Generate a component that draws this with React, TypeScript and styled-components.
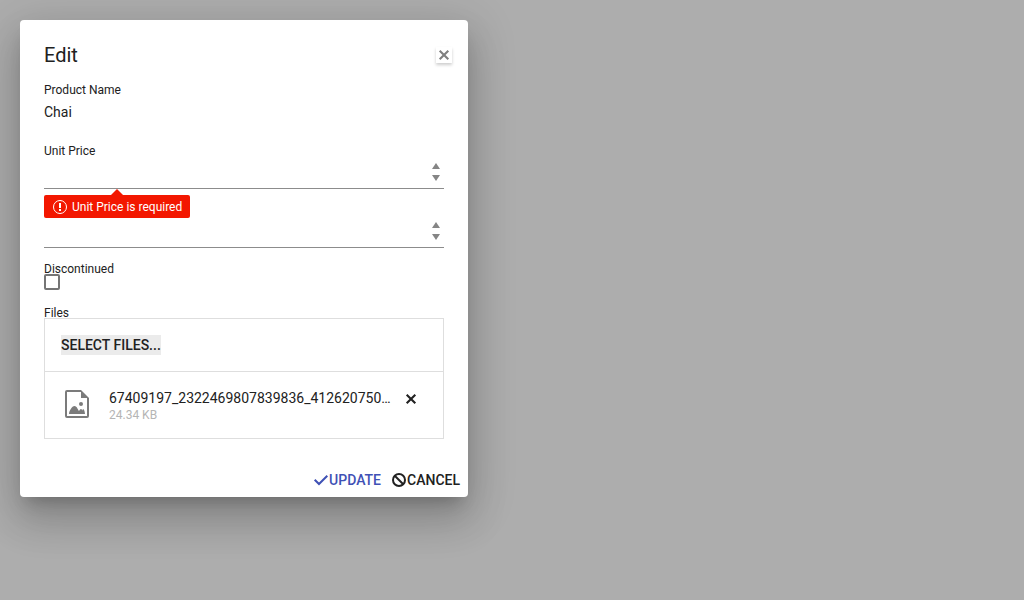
import React, { useState } from "react";
import styled, { createGlobalStyle } from "styled-components";

const GlobalStyle = createGlobalStyle`
  *, *::before, *::after { box-sizing: border-box; }
  body {
    margin: 0;
    background: #adadad;
    color: #212121;
    font: 400 14px/20px Roboto, sans-serif;
  }
  button, input { font: inherit; color: inherit; }
`;

const Page = styled.main`
  min-height: 100vh;
  padding: 20px;
`;

const Dialog = styled.form`
  max-width: 448px;
  background: #fff;
  border-radius: 4px;
  box-shadow: 0 11px 15px -7px rgba(0, 0, 0, 0.2), 0 24px 38px 3px rgba(0, 0, 0, 0.14),
    0 9px 46px 8px rgba(0, 0, 0, 0.12);
`;

const Header = styled.header`
  display: flex;
  align-items: center;
  justify-content: space-between;
  padding: 20px 16px 0 24px;
`;

const Title = styled.h1`
  margin: 0;
  font-size: 20px;
  font-weight: 400;
  line-height: 30px;
`;

const IconButton = styled.button<{ $raised?: boolean }>`
  display: flex;
  align-items: center;
  justify-content: center;
  flex: none;
  width: 16px;
  height: 16px;
  padding: 0;
  border: 0;
  background: none;
  cursor: pointer;
  color: ${(p) => (p.$raised ? "#7f7f7f" : "#212121")};
  box-shadow: ${(p) => (p.$raised ? "0 2px 3px rgba(0, 0, 0, 0.2)" : "none")};
`;

const Body = styled.div`
  display: flex;
  flex-direction: column;
  padding: 15px 24px 0;
`;

const Field = styled.div<{ $before?: number; $gap?: number }>`
  position: relative;
  display: flex;
  flex-direction: column;
  align-items: stretch;
  gap: ${(p) => p.$gap ?? 0}px;
  margin-top: ${(p) => p.$before ?? 0}px;
`;

const Label = styled.label`
  font-size: 12px;
  line-height: 10px;
`;

const Value = styled.output`
  display: block;
`;

const NumberBox = styled.div`
  display: flex;
  height: 30px;
  border-bottom: 1px solid #8c8c8c;
`;

const NumberInput = styled.input`
  flex: 1;
  min-width: 0;
  padding: 4px 0;
  border: 0;
  outline: 0;
  background: none;
  appearance: textfield;
  &::-webkit-inner-spin-button { display: none; }
`;

const Spinner = styled.div`
  display: flex;
  flex-direction: column;
  width: 16px;
  padding: 1px 0 4px;
`;

const SpinButton = styled.button`
  display: flex;
  align-items: center;
  justify-content: center;
  height: 12px;
  padding: 0;
  border: 0;
  background: none;
  color: #858585;
`;

const ErrorTip = styled.div`
  position: absolute;
  z-index: 1;
  top: calc(100% + 6px);
  left: 0;
  display: flex;
  align-items: center;
  gap: 4px;
  height: 23px;
  padding: 0 8px;
  border-radius: 2px;
  background: #f31700;
  color: #fff;
  font-size: 12px;
  line-height: 16px;
  &::before {
    content: "";
    position: absolute;
    bottom: 100%;
    left: 50%;
    margin-left: -6px;
    border: 6px solid transparent;
    border-top: 0;
    border-bottom-color: #f31700;
  }
`;

const Checkbox = styled.input`
  appearance: none;
  width: 16px;
  height: 16px;
  margin: 0;
  border: 2px solid #757575;
  border-radius: 2px;
  background: #fff;
  &:checked { background: #757575; }
`;

const Upload = styled.section`
  border: 1px solid #dedede;
`;

const DropZone = styled.div`
  display: flex;
  padding: 16px;
`;

const SelectButton = styled.button`
  padding: 0;
  border: 0;
  background: #ebebeb;
  font-weight: 500;
  cursor: pointer;
`;

const FileList = styled.ul`
  margin: 0;
  padding: 0;
  list-style: none;
`;

const FileRow = styled.li`
  display: flex;
  align-items: flex-start;
  padding: 16px 24px 16px 16px;
  border-top: 1px solid #dedede;
`;

const FileIcon = styled.svg`
  flex: none;
  width: 32px;
  height: 32px;
  margin-right: 16px;
  color: #7b7b7b;
`;

const FileInfo = styled.div`
  flex: 1;
  min-width: 0;
  margin-right: 12px;
`;

const FileName = styled.div`
  overflow: hidden;
  white-space: nowrap;
  text-overflow: ellipsis;
`;

const FileSize = styled.div`
  color: #b5b5b5;
  font-size: 12px;
  line-height: 14px;
`;

const RemoveSlot = styled.div`
  display: flex;
  padding-top: 3px;
`;

const Footer = styled.footer`
  display: flex;
  justify-content: flex-end;
  gap: 10px;
  padding: 31px 8px 7px;
`;

const ActionButton = styled.button<{ $primary?: boolean }>`
  display: flex;
  align-items: center;
  padding: 0;
  border: 0;
  background: none;
  font-weight: 500;
  cursor: pointer;
  color: ${(p) => (p.$primary ? "#3f51b5" : "#212121")};
`;

const Cross = () => (
  <svg width="16" height="16" viewBox="0 0 16 16" aria-hidden="true">
    <path d="M3.7 3.7 12.3 12.3M12.3 3.7 3.7 12.3" stroke="currentColor" strokeWidth="2.1" />
  </svg>
);

const Arrow = ({ down }: { down?: boolean }) => (
  <svg width="8" height="6" viewBox="0 0 8 6" aria-hidden="true">
    <path d={down ? "M0 0h8L4 6z" : "M0 6h8L4 0z"} fill="currentColor" />
  </svg>
);

type NumberFieldProps = { id: string; label: string; invalid?: boolean };

const NumberField = ({ id, label, invalid }: NumberFieldProps) => {
  const [value, setValue] = useState("");
  const step = (by: number) => setValue(String(Number(value) + by));
  return (
    <NumberBox>
      <NumberInput
        id={id}
        type="number"
        aria-label={label}
        aria-invalid={invalid}
        value={value}
        onChange={(e) => setValue(e.target.value)}
      />
      <Spinner>
        <SpinButton type="button" aria-label="Increase value" onClick={() => step(1)}>
          <Arrow />
        </SpinButton>
        <SpinButton type="button" aria-label="Decrease value" onClick={() => step(-1)}>
          <Arrow down />
        </SpinButton>
      </Spinner>
    </NumberBox>
  );
};

export default function App() {
  return (
    <>
      <GlobalStyle />
      <Page>
        <Dialog role="dialog" aria-labelledby="dialog-title" onSubmit={(e) => e.preventDefault()}>
          <Header>
            <Title id="dialog-title">Edit</Title>
            <IconButton $raised type="button" aria-label="Close">
              <Cross />
            </IconButton>
          </Header>

          <Body>
            <Field $gap={7}>
              <Label htmlFor="product-name">Product Name</Label>
              <Value id="product-name">Chai</Value>
            </Field>

            <Field $before={24} $gap={3}>
              <Label htmlFor="unit-price">Unit Price</Label>
              <NumberField id="unit-price" label="Unit Price" invalid />
              <ErrorTip role="alert">
                <svg width="16" height="16" viewBox="0 0 16 16" aria-hidden="true">
                  <circle cx="8" cy="8" r="6.5" fill="none" stroke="currentColor" />
                  <path d="M7 4h2v5H7zM7 10h2v2H7z" fill="currentColor" />
                </svg>
                Unit Price is required
              </ErrorTip>
            </Field>

            <Field $before={29}>
              <NumberField id="units-in-stock" label="Units In Stock" />
            </Field>

            <Field $before={16}>
              <Label htmlFor="discontinued">Discontinued</Label>
              <Checkbox id="discontinued" type="checkbox" />
            </Field>

            <Field $before={18}>
              <Label as="span" id="files-label">Files</Label>
              <Upload aria-labelledby="files-label">
                <DropZone>
                  <SelectButton type="button">SELECT FILES...</SelectButton>
                </DropZone>
                <FileList>
                  <FileRow>
                    <FileIcon viewBox="0 0 32 32" aria-hidden="true">
                      <path
                        fill="currentColor"
                        fillRule="evenodd"
                        d="M6 2h14v6a2 2 0 0 0 2 2h6v18a2 2 0 0 1-2 2H6a2 2 0 0 1-2-2V4a2 2 0 0 1 2-2zM6 4v24h20V10h-6V4z"
                      />
                      <path fill="currentColor" d="M20 2l8 8h-8z" />
                      <circle cx="20" cy="16" r="2" fill="currentColor" />
                      <path
                        fill="currentColor"
                        d="M8 26c0-3 3-8 5.500-8 2.500 0 3.500 4 4.500 5 .7-1.200 1.300-2 2-2 .8 0 1.300 1.500 1.500 1.500S21.500 21 22 21c1 0 2 3 2 5z"
                      />
                    </FileIcon>
                    <FileInfo>
                      <FileName>67409197_2322469807839836_4126207506543128576_n.jpg</FileName>
                      <FileSize>24.34 KB</FileSize>
                    </FileInfo>
                    <RemoveSlot>
                      <IconButton type="button" aria-label="Remove file">
                        <Cross />
                      </IconButton>
                    </RemoveSlot>
                  </FileRow>
                </FileList>
              </Upload>
            </Field>
          </Body>

          <Footer>
            <ActionButton $primary type="submit">
              <svg width="16" height="16" viewBox="0 0 16 16" aria-hidden="true">
                <path d="M1.700 7.700 6 12 14.300 3.700" fill="none" stroke="currentColor" strokeWidth="2" />
              </svg>
              UPDATE
            </ActionButton>
            <ActionButton type="button">
              <svg width="16" height="16" viewBox="0 0 16 16" aria-hidden="true">
                <circle cx="8" cy="8" r="6" fill="none" stroke="currentColor" strokeWidth="2" />
                <path d="M4 4l8 8" stroke="currentColor" strokeWidth="2" />
              </svg>
              CANCEL
            </ActionButton>
          </Footer>
        </Dialog>
      </Page>
    </>
  );
}
